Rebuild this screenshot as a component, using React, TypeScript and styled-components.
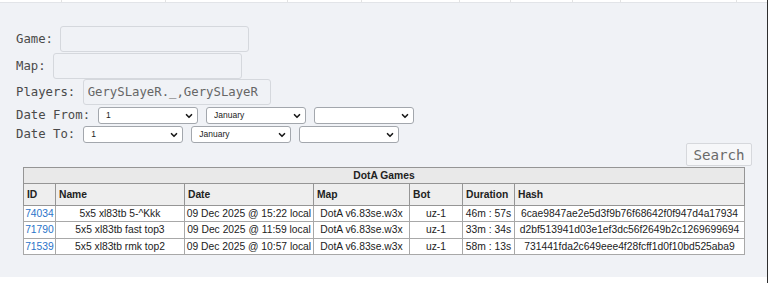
import React from "react";
import styled, { createGlobalStyle } from "styled-components";
import { ChevronDown } from "lucide-react";

const GlobalStyle = createGlobalStyle`
    body {
        margin: 0;
        background: #ffffff;
    }
`;

const games = [
    { id: "74034", name: "5x5 xl83tb 5-^Kkk", date: "09 Dec 2025 @ 15:22 local", map: "DotA v6.83se.w3x", bot: "uz-1", duration: "46m : 57s", hash: "6cae9847ae2e5d3f9b76f68642f0f947d4a17934" },
    { id: "71790", name: "5x5 xl83tb fast top3", date: "09 Dec 2025 @ 11:59 local", map: "DotA v6.83se.w3x", bot: "uz-1", duration: "33m : 34s", hash: "d2bf513941d03e1ef3dc56f2649b2c1269699694" },
    { id: "71539", name: "5x5 xl83tb rmk top2", date: "09 Dec 2025 @ 10:57 local", map: "DotA v6.83se.w3x", bot: "uz-1", duration: "58m : 13s", hash: "731441fda2c649eee4f28fcff1d0f10bd525aba9" },
];

const stripCells = [62, 104, 122, 74, 98, 51, 62, 48, 116];
const columns = [
    { title: "ID", width: 32 },
    { title: "Name", width: 129 },
    { title: "Date", width: 129 },
    { title: "Map", width: 96 },
    { title: "Bot", width: 53 },
    { title: "Duration", width: 52 },
    { title: "Hash", width: 230 },
];

const DateSelect = ({ value }: { value: string }) => (
    <SelectWrap>
        <Select defaultValue={value}>
            <option>{value}</option>
        </Select>
        <Chevron>
            <ChevronDown size={10} strokeWidth={4} />
        </Chevron>
    </SelectWrap>
);

const App = () => {
    return (
        <Page>
            <GlobalStyle />
            <TopStrip>
                {stripCells.map((w, i) => (
                    <StripCell key={i} $w={w} />
                ))}
            </TopStrip>
            <Panel>
                <FieldRow>
                    <Label>Game:</Label>
                    <TextInput $w={189} />
                </FieldRow>
                <FieldRow>
                    <Label>Map:</Label>
                    <TextInput $w={189} />
                </FieldRow>
                <FieldRow>
                    <Label>Players:</Label>
                    <TextInput $w={188} defaultValue="GerySLayeR._,GerySLayeR" />
                </FieldRow>
                <DateRow>
                    <DateLabel>Date From:</DateLabel>
                    <DateSelect value="1" />
                    <DateSelect value="January" />
                    <DateSelect value="" />
                </DateRow>
                <DateRow>
                    <DateLabel>Date To:</DateLabel>
                    <DateSelect value="1" />
                    <DateSelect value="January" />
                    <DateSelect value="" />
                </DateRow>
                <ButtonRow>
                    <SearchButton>Search</SearchButton>
                </ButtonRow>
                <GamesTable>
                    <colgroup>
                        {columns.map(c => (
                            <col key={c.title} style={{ width: c.width }} />
                        ))}
                    </colgroup>
                    <thead>
                        <tr>
                            <TitleCell colSpan={7}>DotA Games</TitleCell>
                        </tr>
                        <tr>
                            {columns.map(c => (
                                <HeadCell key={c.title}>{c.title}</HeadCell>
                            ))}
                        </tr>
                    </thead>
                    <tbody>
                        {games.map(g => (
                            <tr key={g.id}>
                                <Cell>
                                    <GameLink href="#">{g.id}</GameLink>
                                </Cell>
                                <Cell>{g.name}</Cell>
                                <Cell>{g.date}</Cell>
                                <Cell>{g.map}</Cell>
                                <Cell>{g.bot}</Cell>
                                <Cell>{g.duration}</Cell>
                                <Cell>{g.hash}</Cell>
                            </tr>
                        ))}
                    </tbody>
                </GamesTable>
            </Panel>
        </Page>
    );
};

const Page = styled.div`
    width: 768px;
    height: 283px;
    box-sizing: border-box;
    border-right: 1px solid #2e2e2e;
    display: flex;
    flex-direction: column;
    overflow: hidden;
`;

const TopStrip = styled.div`
    height: 3px;
    box-sizing: border-box;
    display: flex;
    background: #ffffff;
    border-bottom: 1px solid #e2e4e8;
`;

const StripCell = styled.div<{ $w: number }>`
    width: ${p => p.$w}px;
    box-sizing: border-box;
    border-right: 1px solid #e3e3e3;
`;

const Panel = styled.div`
    height: 274px;
    box-sizing: border-box;
    background: #f0f2f6;
    padding: 23px 15px 0 16px;
    display: flex;
    flex-direction: column;
`;

const FieldRow = styled.div`
    height: 26.5px;
    display: flex;
    align-items: center;
`;

const DateRow = styled.div`
    height: 19px;
    display: flex;
    align-items: center;
    gap: 8px;
`;

const Label = styled.span`
    font-family: "DejaVu Sans Mono", monospace;
    font-size: 12.3px;
    color: #4a4a4a;
    margin-right: 7.4px;
`;

const DateLabel = styled(Label)`
    margin-right: 0;
`;

const TextInput = styled.input<{ $w: number }>`
    width: ${p => p.$w}px;
    height: 26px;
    box-sizing: border-box;
    border: 1px solid #d5d8dd;
    border-radius: 3px;
    background: transparent;
    padding: 0 4px;
    font-family: "DejaVu Sans Mono", monospace;
    font-size: 12.3px;
    color: #666666;
    outline: none;
`;

const SelectWrap = styled.span`
    position: relative;
    display: inline-flex;
    width: 100px;
    height: 17px;
`;

const Select = styled.select`
    appearance: none;
    width: 100%;
    height: 100%;
    box-sizing: border-box;
    border: 1px solid #a3a7ad;
    border-radius: 3px;
    background: #ffffff;
    padding: 0 0 0 7px;
    font-family: "Liberation Sans", Arial, sans-serif;
    font-size: 8.5px;
    color: #222222;
    outline: none;
`;

const Chevron = styled.span`
    position: absolute;
    right: 4px;
    top: 4px;
    display: flex;
    color: #1a1a1a;
    pointer-events: none;
`;

const ButtonRow = styled.div`
    display: flex;
    justify-content: flex-end;
    margin-top: -0.5px;
`;

const SearchButton = styled.button`
    width: 66px;
    height: 23px;
    box-sizing: border-box;
    border: 1px solid #d6d8dc;
    border-radius: 2px;
    background: #f6f7f9;
    padding: 0;
    font-family: "DejaVu Sans Mono", monospace;
    font-size: 14.2px;
    color: #6a6a6a;
`;

const GamesTable = styled.table`
    width: 721px;
    margin: 0.5px auto 0;
    border-collapse: collapse;
    table-layout: fixed;
    font-family: "Liberation Sans", Arial, sans-serif;
    font-size: 10.3px;
    color: #222222;
    border: 1px solid #959595;
`;

const TitleCell = styled.th`
    height: 15px;
    padding: 0;
    background: #e9e9e9;
    border: 1px solid #959595;
    text-align: center;
    font-weight: bold;
`;

const HeadCell = styled.th`
    height: 21px;
    padding: 0 0 0 3px;
    background: #eeeeee;
    border: 1px solid #959595;
    text-align: left;
    font-weight: bold;
    white-space: nowrap;
    overflow: hidden;
`;

const Cell = styled.td`
    height: 15.6px;
    padding: 0;
    background: #ffffff;
    border: 1px solid #a8a8a8;
    text-align: center;
    white-space: nowrap;
    overflow: hidden;
`;

const GameLink = styled.a`
    color: #2a73c9;
    text-decoration: none;
`;

export default App;
